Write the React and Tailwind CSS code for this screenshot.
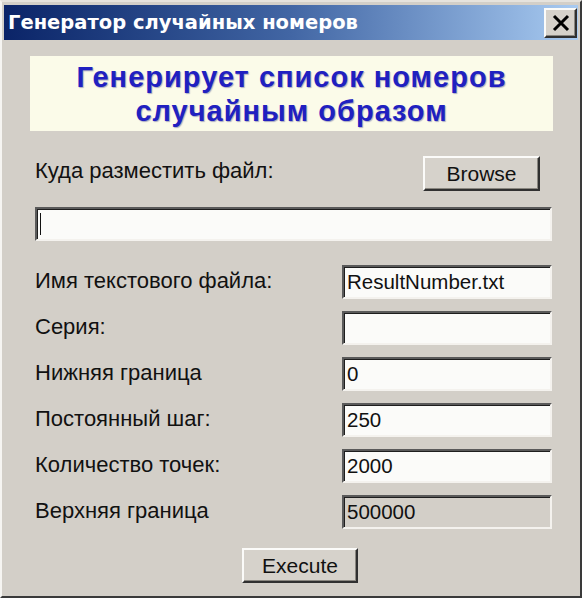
import { useState } from 'react'

const FONT = { fontFamily: '"Liberation Sans", Arial, sans-serif' }

const FIELDS = [
  { label: 'Имя текстового файла:', value: 'ResultNumber.txt' },
  { label: 'Серия:', value: '' },
  { label: 'Нижняя граница', value: '0' },
  { label: 'Постоянный шаг:', value: '250' },
  { label: 'Количество точек:', value: '2000' },
  { label: 'Верхняя граница', value: '500000', disabled: true },
]

function Sunken({ value, disabled, className = '' }) {
  return (
    <div
      className={`flex h-[34px] items-center border-t-2 border-l-2 border-b-2 border-r-2 border-t-[#5a5a5a] border-l-[#5a5a5a] border-b-[#f4f2ee] border-r-[#f4f2ee] pl-[3px] text-[20.5px] leading-none text-[#111] shadow-[inset_1px_1px_0_#1e1e1e] ${
        disabled ? 'bg-[#d3cfc8]' : 'bg-[#fbfbf9]'
      } ${className}`}
    >
      {value}
    </div>
  )
}

function RaisedButton({ children, className = '' }) {
  return (
    <button
      className={`flex items-center justify-center border-t-2 border-l-2 border-b-2 border-r-2 border-t-[#fbfbf9] border-l-[#fbfbf9] border-b-[#303030] border-r-[#303030] bg-[#d6d2cb] text-[21px] leading-none text-[#111] shadow-[inset_-1px_-1px_0_#8a8780] ${className}`}
    >
      {children}
    </button>
  )
}

export default function App() {
  const [path] = useState('')

  return (
    <div className="min-h-[600px] bg-white" style={FONT}>
      <div className="flex h-[598px] w-[582px] flex-col border-t-2 border-l-2 border-b-2 border-r-2 border-t-[#e6e3dd] border-l-[#f6f5f2] border-b-[#3a3a3a] border-r-[#3a3a3a] bg-[#d3cfc8] px-[2px] pt-[3px]">
        {/* title bar */}
        <div className="flex h-[35px] items-center justify-between bg-gradient-to-r from-[#0b2468] via-[#4266a4] to-[#a9cbf1] pl-[4px] pr-[1px]">
          <span className="font-['DejaVu_Sans',sans-serif] text-[19.5px] font-bold leading-none text-white">
            Генератор случайных номеров
          </span>
          <RaisedButton className="h-[30px] w-[33px]">
            <svg width="20" height="18" viewBox="0 0 20 18">
              <path d="M3 2 L17 16 M17 2 L3 16" stroke="#000" strokeWidth="3" />
            </svg>
          </RaisedButton>
        </div>

        {/* banner */}
        <div className="mt-[16px] ml-[26px] flex h-[75px] w-[523px] flex-col items-center justify-center bg-[#fbfbe9] text-[29px] font-bold leading-[34px] tracking-[1px] text-[#2020c0] [text-shadow:1px_1px_1px_rgba(20,20,120,0.35)]">
          <span>Генерирует список номеров</span>
          <span>случайным образом</span>
        </div>

        {/* path row */}
        <div className="mt-[25px] flex h-[35px] items-center justify-between pl-[31px] pr-[38px]">
          <span className="-mt-[6px] text-[22px] leading-none text-[#111]">Куда разместить файл:</span>
          <RaisedButton className="h-[35px] w-[117px]">Browse</RaisedButton>
        </div>
        <div className="mt-[16px] ml-[31px] w-[517px]">
          <Sunken value={path} className="before:mr-[1px] before:h-[22px] before:w-[1px] before:bg-[#111] before:content-['']" />
        </div>

        {/* fields */}
        <div className="mt-[24px] flex flex-col gap-[12px]">
          {FIELDS.map((f) => (
            <div key={f.label} className="flex h-[34px] items-center pl-[31px]">
              <span className="-mt-[2px] w-[307px] text-[22px] leading-none text-[#111]">{f.label}</span>
              <Sunken value={f.value} disabled={f.disabled} className="w-[210px]" />
            </div>
          ))}
        </div>

        <div className="mt-[19px] flex justify-center pl-[18px]">
          <RaisedButton className="h-[35px] w-[116px]">Execute</RaisedButton>
        </div>
      </div>
    </div>
  )
}
